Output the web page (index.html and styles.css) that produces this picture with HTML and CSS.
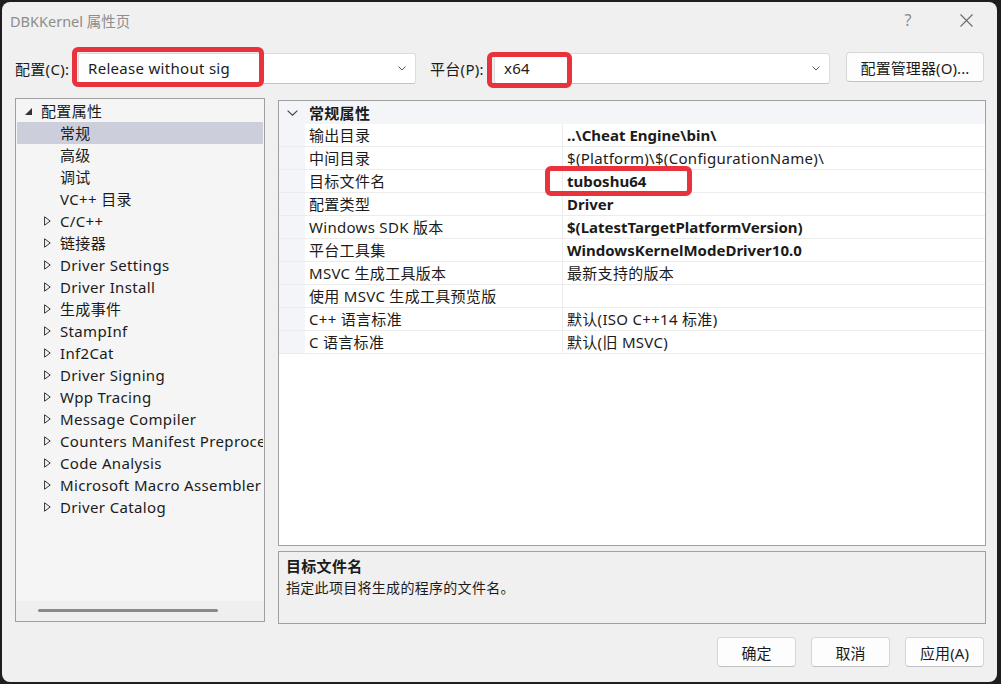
FILE: index.html
```html
<!DOCTYPE html>
<html lang="zh-CN">
<head>
  <meta charset="UTF-8">
  <title>DBKKernel 属性页</title>
  <link rel="stylesheet" href="styles.css">
</head>
<body>

<div class="window">

  <!-- 标题栏 -->
  <div class="titlebar">
    <span class="title">DBKKernel 属性页</span>
    <div class="tb-btns">
      <span class="tb-btn help">?</span>
      <span class="tb-btn close">
        <svg width="13" height="13" viewBox="0 0 13 13"><path d="M0.5 0.5 L12.5 12.5 M12.5 0.5 L0.5 12.5" stroke="#6a6a6a" stroke-width="1.1" fill="none"/></svg>
      </span>
    </div>
  </div>

  <!-- 配置 / 平台 -->
  <div class="config-row">
    <span class="cfg-label label-config">配置(C):</span>
    <div class="combo combo-config">
      <span class="combo-text">Release without sig</span>
      <svg class="chev" width="8" height="5" viewBox="0 0 8 5"><path d="M0.5 0.5 L4 4 L7.5 0.5" stroke="#555" stroke-width="1" fill="none"/></svg>
    </div>
    <span class="cfg-label label-platform">平台(P):</span>
    <div class="combo combo-platform">
      <span class="combo-text">x64</span>
      <svg class="chev" width="8" height="5" viewBox="0 0 8 5"><path d="M0.5 0.5 L4 4 L7.5 0.5" stroke="#555" stroke-width="1" fill="none"/></svg>
    </div>
    <button class="btn btn-manager">配置管理器(O)...</button>
  </div>

  <div class="main">

    <!-- 左侧树 -->
    <div class="tree">
      <div class="tree-items">
        <div class="tree-row lvl0">
          <span class="exp"><svg width="7" height="7" viewBox="0 0 7 7"><polygon points="7,0 7,7 0,7" fill="#333"/></svg></span>配置属性
        </div>
        <div class="tree-row lvl1 leaf selected">常规</div>
        <div class="tree-row lvl1 leaf">高级</div>
        <div class="tree-row lvl1 leaf">调试</div>
        <div class="tree-row lvl1 leaf">VC++ 目录</div>
        <div class="tree-row lvl1"><span class="exp"><svg width="7" height="10" viewBox="0 0 7 10"><path d="M0.6 0.8 L6.2 5 L0.6 9.2 Z" stroke="#333" stroke-width="1" fill="none"/></svg></span>C/C++</div>
        <div class="tree-row lvl1"><span class="exp"><svg width="7" height="10" viewBox="0 0 7 10"><path d="M0.6 0.8 L6.2 5 L0.6 9.2 Z" stroke="#333" stroke-width="1" fill="none"/></svg></span>链接器</div>
        <div class="tree-row lvl1"><span class="exp"><svg width="7" height="10" viewBox="0 0 7 10"><path d="M0.6 0.8 L6.2 5 L0.6 9.2 Z" stroke="#333" stroke-width="1" fill="none"/></svg></span>Driver Settings</div>
        <div class="tree-row lvl1"><span class="exp"><svg width="7" height="10" viewBox="0 0 7 10"><path d="M0.6 0.8 L6.2 5 L0.6 9.2 Z" stroke="#333" stroke-width="1" fill="none"/></svg></span>Driver Install</div>
        <div class="tree-row lvl1"><span class="exp"><svg width="7" height="10" viewBox="0 0 7 10"><path d="M0.6 0.8 L6.2 5 L0.6 9.2 Z" stroke="#333" stroke-width="1" fill="none"/></svg></span>生成事件</div>
        <div class="tree-row lvl1"><span class="exp"><svg width="7" height="10" viewBox="0 0 7 10"><path d="M0.6 0.8 L6.2 5 L0.6 9.2 Z" stroke="#333" stroke-width="1" fill="none"/></svg></span>StampInf</div>
        <div class="tree-row lvl1"><span class="exp"><svg width="7" height="10" viewBox="0 0 7 10"><path d="M0.6 0.8 L6.2 5 L0.6 9.2 Z" stroke="#333" stroke-width="1" fill="none"/></svg></span>Inf2Cat</div>
        <div class="tree-row lvl1"><span class="exp"><svg width="7" height="10" viewBox="0 0 7 10"><path d="M0.6 0.8 L6.2 5 L0.6 9.2 Z" stroke="#333" stroke-width="1" fill="none"/></svg></span>Driver Signing</div>
        <div class="tree-row lvl1"><span class="exp"><svg width="7" height="10" viewBox="0 0 7 10"><path d="M0.6 0.8 L6.2 5 L0.6 9.2 Z" stroke="#333" stroke-width="1" fill="none"/></svg></span>Wpp Tracing</div>
        <div class="tree-row lvl1"><span class="exp"><svg width="7" height="10" viewBox="0 0 7 10"><path d="M0.6 0.8 L6.2 5 L0.6 9.2 Z" stroke="#333" stroke-width="1" fill="none"/></svg></span>Message Compiler</div>
        <div class="tree-row lvl1"><span class="exp"><svg width="7" height="10" viewBox="0 0 7 10"><path d="M0.6 0.8 L6.2 5 L0.6 9.2 Z" stroke="#333" stroke-width="1" fill="none"/></svg></span>Counters Manifest Preproce</div>
        <div class="tree-row lvl1"><span class="exp"><svg width="7" height="10" viewBox="0 0 7 10"><path d="M0.6 0.8 L6.2 5 L0.6 9.2 Z" stroke="#333" stroke-width="1" fill="none"/></svg></span>Code Analysis</div>
        <div class="tree-row lvl1"><span class="exp"><svg width="7" height="10" viewBox="0 0 7 10"><path d="M0.6 0.8 L6.2 5 L0.6 9.2 Z" stroke="#333" stroke-width="1" fill="none"/></svg></span>Microsoft Macro Assembler</div>
        <div class="tree-row lvl1"><span class="exp"><svg width="7" height="10" viewBox="0 0 7 10"><path d="M0.6 0.8 L6.2 5 L0.6 9.2 Z" stroke="#333" stroke-width="1" fill="none"/></svg></span>Driver Catalog</div>
      </div>
      <div class="hscroll"><div class="thumb"></div></div>
    </div>

    <!-- 右侧属性表 -->
    <div class="right">
      <div class="grid">
        <div class="grid-header">
          <span class="gutter"><svg width="11" height="6" viewBox="0 0 11 6"><path d="M0.6 0.6 L5.5 5.2 L10.4 0.6" stroke="#444" stroke-width="1.2" fill="none"/></svg></span>
          <span class="hdr-text">常规属性</span>
        </div>
        <div class="grid-row"><span class="gutter"></span><span class="name">输出目录</span><span class="value bold">..\Cheat Engine\bin\</span></div>
        <div class="grid-row"><span class="gutter"></span><span class="name">中间目录</span><span class="value">$(Platform)\$(ConfigurationName)\</span></div>
        <div class="grid-row"><span class="gutter"></span><span class="name">目标文件名</span><span class="value bold">tuboshu64</span></div>
        <div class="grid-row"><span class="gutter"></span><span class="name">配置类型</span><span class="value bold">Driver</span></div>
        <div class="grid-row"><span class="gutter"></span><span class="name">Windows SDK 版本</span><span class="value bold">$(LatestTargetPlatformVersion)</span></div>
        <div class="grid-row"><span class="gutter"></span><span class="name">平台工具集</span><span class="value bold">WindowsKernelModeDriver10.0</span></div>
        <div class="grid-row"><span class="gutter"></span><span class="name">MSVC 生成工具版本</span><span class="value">最新支持的版本</span></div>
        <div class="grid-row"><span class="gutter"></span><span class="name">使用 MSVC 生成工具预览版</span><span class="value"></span></div>
        <div class="grid-row"><span class="gutter"></span><span class="name">C++ 语言标准</span><span class="value">默认(ISO C++14 标准)</span></div>
        <div class="grid-row"><span class="gutter"></span><span class="name">C 语言标准</span><span class="value">默认(旧 MSVC)</span></div>
      </div>
      <div class="desc">
        <div class="desc-title">目标文件名</div>
        <div class="desc-text">指定此项目将生成的程序的文件名。</div>
      </div>
    </div>

  </div>

  <div class="footer">
    <button class="btn btn-foot">确定</button>
    <button class="btn btn-foot">取消</button>
    <button class="btn btn-foot">应用(A)</button>
  </div>

</div>

<!-- 红框标注 -->
<div class="mark mark-config"></div>
<div class="mark mark-platform"></div>
<div class="mark mark-target"></div>

</body>
</html>
```

FILE: styles.css
```css
body {
  margin: 0;
  background: #1e1e1e;
  font-family: "Noto Sans", "Noto Sans CJK SC", sans-serif;
  font-size: 15px;
  letter-spacing: 0.3px;
  color: #1b1b1b;
  position: relative;
  width: 1001px;
  height: 684px;
  overflow: hidden;
}

.window {
  margin: 2px 0 0 2px;
  width: 995px;
  height: 680px;
  background: #f0f0f0;
  border-radius: 8px;
  box-sizing: border-box;
  display: flex;
  flex-direction: column;
}

/* 标题栏 */
.titlebar {
  height: 36px;
  display: flex;
  align-items: center;
  padding-left: 8px;
  padding-right: 2px;
}

.title {
  color: #8d8d8d;
  font-size: 14.5px;
  letter-spacing: 0;
}

.tb-btns {
  margin-left: auto;
  display: flex;
  height: 100%;
}

.tb-btn {
  width: 58px;
  display: flex;
  align-items: center;
  justify-content: center;
  color: #8a8a8a;
  font-size: 16px;
}

/* 配置行 */
.config-row {
  margin-top: 14px;
  height: 32px;
  padding: 0 13px;
  display: flex;
  align-items: center;
}

.cfg-label {
  flex: none;
}

.label-config {
  width: 63px;
}

.label-platform {
  width: 64px;
  margin-left: 14px;
}

.combo {
  flex: none;
  height: 31px;
  box-sizing: border-box;
  background: #fff;
  border: 1px solid #dcdcdc;
  border-bottom-color: #c4c4c4;
  border-radius: 3px;
  display: flex;
  align-items: center;
  padding: 0 8px 0 9px;
}

.combo-config {
  width: 338px;
}

.combo-platform {
  width: 336px;
}

.combo-text {
  flex: 1;
}

.chev {
  margin-right: 1px;
}

.btn {
  font-family: inherit;
  font-size: 15px;
  letter-spacing: 0.1px;
  color: #1b1b1b;
  background: #fdfdfd;
  border: 1px solid #d6d6d6;
  border-bottom-color: #c2c2c2;
  border-radius: 4px;
  height: 30px;
  padding: 0;
  box-sizing: border-box;
}

.btn-manager {
  margin-left: auto;
  width: 138px;
  align-self: flex-start;
}

/* 主体 */
.main {
  margin-top: 14px;
  height: 526px;
  padding: 0 11px 0 13px;
  display: flex;
  gap: 13px;
}

.tree {
  width: 250px;
  height: 524px;
  flex: none;
  box-sizing: border-box;
  border: 1px solid #a0a0a0;
  background: #f5f5f5;
  display: flex;
  flex-direction: column;
}

.tree-items {
  flex: 1;
  padding: 1px 1px 0 1px;
  overflow: hidden;
  letter-spacing: 0.35px;
}

.tree-row {
  height: 22px;
  line-height: 20px;
  display: flex;
  align-items: center;
  white-space: nowrap;
  overflow: hidden;
}

.tree-row.lvl0 {
  padding-left: 8px;
}

.tree-row.lvl1 {
  padding-left: 27px;
}

.tree-row.leaf {
  padding-left: 43px;
}

.tree-row.selected {
  background: #cccedb;
}

.exp {
  width: 16px;
  flex: none;
  display: flex;
  align-items: center;
}

.hscroll {
  height: 20px;
  background: #efefef;
  position: relative;
}

.thumb {
  position: absolute;
  left: 22px;
  top: 8px;
  width: 180px;
  height: 3px;
  border-radius: 2px;
  background: #8a8a8a;
}

.right {
  flex: 1;
  padding-top: 2px;
  display: flex;
  flex-direction: column;
  gap: 5px;
}

.grid {
  flex: 1;
  background: #fff;
  border: 1px solid #a0a0a0;
}

.grid-header {
  height: 23px;
  line-height: 20px;
  display: flex;
  align-items: center;
  background: #f4f5f8;
  font-weight: bold;
}

.gutter {
  width: 26px;
  flex: none;
  align-self: stretch;
  display: flex;
  align-items: center;
  justify-content: center;
  background: #f4f5f8;
}

.hdr-text {
  padding-left: 4px;
}

.grid-row {
  height: 23px;
  line-height: 20px;
  display: flex;
  box-sizing: border-box;
  border-bottom: 1px solid #ececec;
}

.grid-row .name {
  width: 258px;
  flex: none;
  padding-left: 4px;
  box-sizing: border-box;
  border-right: 1px solid #ececec;
  display: flex;
  align-items: center;
}

.grid-row .value {
  flex: 1;
  padding-left: 4px;
  display: flex;
  align-items: center;
  white-space: nowrap;
}

.bold {
  font-weight: bold;
  letter-spacing: 0;
}

.desc {
  height: 73px;
  box-sizing: border-box;
  border: 1px solid #a0a0a0;
  background: #f0f0f0;
  padding: 3px 7px;
}

.desc-title {
  font-weight: bold;
  font-size: 15px;
  height: 22px;
  line-height: 22px;
}

.desc-text {
  font-size: 14px;
  line-height: 22px;
}

/* 底部按钮 */
.footer {
  margin-top: 13px;
  padding-right: 13px;
  display: flex;
  justify-content: flex-end;
  gap: 15px;
}

.btn-foot {
  width: 79px;
}

/* 红框 */
.mark {
  position: absolute;
  border: 5px solid #e8323c;
  border-radius: 6px;
  box-sizing: border-box;
}

.mark-config {
  left: 72px;
  top: 47px;
  width: 192px;
  height: 40px;
}

.mark-platform {
  left: 487px;
  top: 52px;
  width: 85px;
  height: 36px;
}

.mark-target {
  left: 545px;
  top: 166px;
  width: 147px;
  height: 30px;
}
```
